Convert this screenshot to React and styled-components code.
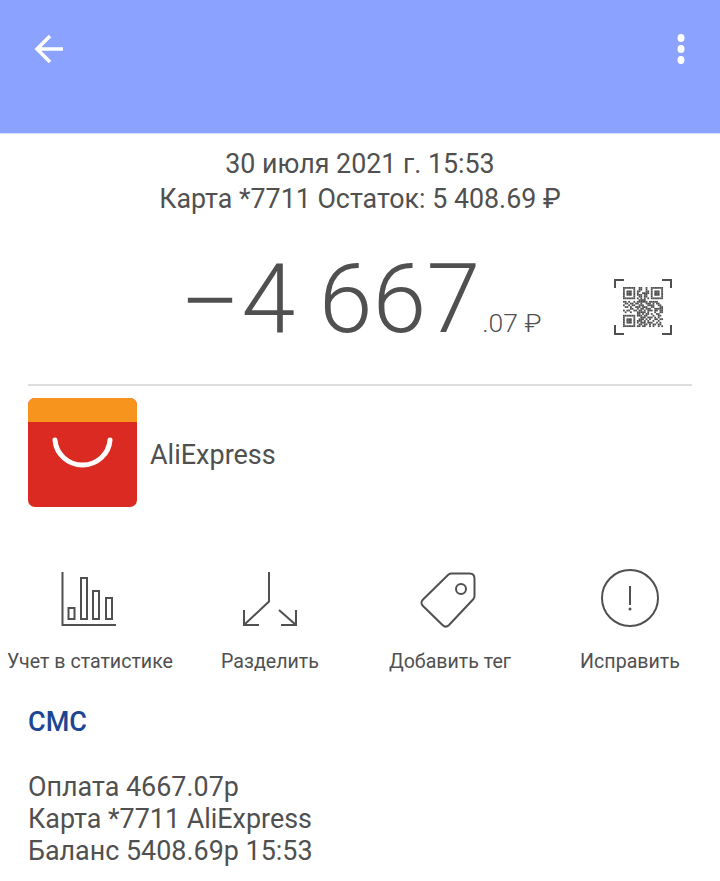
import React from 'react';
import styled, { createGlobalStyle } from 'styled-components';

const GlobalStyles = createGlobalStyle`
  html, body {
    margin: 0;
    padding: 0;
    background: #fff;
  }
  body {
    font-family: Roboto, "Liberation Sans", sans-serif;
    color: #505050;
  }
`;

const Page = styled.div`
  width: 720px;
  height: 881px;
  overflow: hidden;
  background: #fff;
`;

const TopBar = styled.header`
  height: 134px;
  background: #8ba3fe;
  border-bottom: 1px solid #d5deff;
  box-sizing: border-box;
  display: flex;
  justify-content: space-between;
  align-items: flex-start;
  padding: 33px 22px 0 33px;
`;

const Details = styled.section`
  padding-top: 13px;
  text-align: center;
  font-size: 26.8px;
  line-height: 35px;
`;

const DetailLine = styled.div`
  white-space: nowrap;
`;

const AmountRow = styled.div`
  height: 169px;
  margin: 0 28px;
  padding: 0 20px 0 151px;
  display: flex;
  align-items: flex-start;
  justify-content: space-between;
  border-bottom: 2px solid #dedede;
  box-sizing: border-box;
`;

const Amount = styled.div`
  display: flex;
  align-items: baseline;
  margin-top: 26px;
  font-weight: 300;
  font-size: 97px;
  line-height: 112px;
  white-space: nowrap;
`;

const Minus = styled.span`
  display: inline-block;
  margin-right: 7px;
  transform: translateY(3px) scaleX(1.12);
  transform-origin: left center;
`;

const Kopecks = styled.span`
  font-size: 26.5px;
  margin-left: 2px;
`;

const QrBox = styled.div`
  margin-top: 61px;
  width: 58px;
  height: 58px;
`;

const Merchant = styled.div`
  display: flex;
  align-items: center;
  gap: 13px;
  margin: 12px 28px 0;
  font-size: 27px;
`;

const MerchantName = styled.span`
  padding-top: 4px;
`;

const Actions = styled.nav`
  display: grid;
  grid-template-columns: repeat(4, 180px);
  margin-top: 64px;
`;

const Action = styled.div`
  display: flex;
  flex-direction: column;
  align-items: center;
  font-size: 19.6px;
  line-height: 24px;
  white-space: nowrap;
`;

const ActionIcon = styled.svg`
  display: block;
  width: 64px;
  height: 64px;
  margin-bottom: 15px;
  overflow: visible;
  fill: none;
  stroke: #505050;
  stroke-width: 2;
`;

const Sms = styled.section`
  margin: 32px 28px 0;
`;

const SmsTitle = styled.h2`
  margin: 0 0 33px;
  font-size: 27px;
  line-height: 32px;
  font-weight: 500;
  color: #1c4693;
`;

const SmsLine = styled.div`
  font-size: 26.9px;
  line-height: 32px;
  white-space: nowrap;
`;

const QR_ROWS = [
  '11111110011001001111111',
  '10000010011001001000001',
  '10111010110001101011101',
  '10111010100111101011101',
  '10111010111011001011101',
  '10000010011011001000001',
  '11111110101010101111111',
  '00000000011110000000000',
  '11010010111111011111000',
  '01101101101001110101100',
  '10010110011100111100110',
  '01101001110111001100011',
  '00001100101101110011111',
  '10110011011010111011011',
  '01001000111110100010011',
  '00000000110101101001100',
  '11111110111011000100110',
  '10000010001110111010100',
  '10111010011101010011011',
  '10111010111010100100100',
  '10111010101110111001010',
  '10000010011011010110110',
  '11111110110110010100101',
];

function QrIcon() {
  const cell = 40 / QR_ROWS.length;
  const cells = [];
  QR_ROWS.forEach((row, y) => {
    [...row].forEach((bit, x) => {
      if (bit === '1') {
        cells.push(<rect key={`${x}-${y}`} x={9 + x * cell} y={9 + y * cell} width={cell + 0.05} height={cell + 0.05} />);
      }
    });
  });
  return (
    <svg width="58" height="58" viewBox="0 0 58 58">
      <path
        d="M1 10V2h9M48 2h9v8M1 47v9h9M48 56h9v-9"
        fill="none"
        stroke="#505050"
        strokeWidth="2"
      />
      <g fill="#505050">{cells}</g>
    </svg>
  );
}

function AliLogo() {
  return (
    <svg width="109" height="109" viewBox="0 0 109 109" style={{ display: 'block' }}>
      <rect width="109" height="109" rx="7" fill="#da2a21" />
      <path d="M7 0h95a7 7 0 0 1 7 7v17H0V7a7 7 0 0 1 7-7z" fill="#f7941d" />
      <path
        d="M27 42c1 14 13 25 27.500 25S81 56 82 42"
        fill="none"
        stroke="#fff"
        strokeWidth="5"
        strokeLinecap="round"
      />
    </svg>
  );
}

function App() {
  return (
    <Page>
      <GlobalStyles />
      <TopBar>
        <svg width="34" height="34" viewBox="0 0 34 34" fill="none" stroke="#fff" strokeWidth="3.500">
          <path d="M4 16h26M17 3L4 16l13 13" />
        </svg>
        <svg width="34" height="34" viewBox="0 0 34 34" fill="#fff">
          <ellipse cx="17" cy="5" rx="3.500" ry="4" />
          <ellipse cx="17" cy="16" rx="3.500" ry="4" />
          <ellipse cx="17" cy="27" rx="3.500" ry="4" />
        </svg>
      </TopBar>

      <Details>
        <DetailLine>30 июля 2021 г. 15:53</DetailLine>
        <DetailLine>Карта *7711 Остаток: 5 408.69 ₽</DetailLine>
      </Details>

      <AmountRow>
        <Amount>
          <Minus>−</Minus>4 667<Kopecks>.07 ₽</Kopecks>
        </Amount>
        <QrBox>
          <QrIcon />
        </QrBox>
      </AmountRow>

      <Merchant>
        <AliLogo />
        <MerchantName>AliExpress</MerchantName>
      </Merchant>

      <Actions>
        <Action>
          <ActionIcon viewBox="0 0 64 64">
            <path d="M4.500 1v53H58" />
            <rect x="10.500" y="37" width="6" height="11" />
            <rect x="23" y="7" width="6" height="41" />
            <rect x="35" y="20" width="6" height="28" />
            <rect x="48" y="27" width="6" height="21" />
          </ActionIcon>
          Учет в статистике
        </Action>
        <Action>
          <ActionIcon viewBox="0 0 64 64">
            <path d="M31 1v29.500L6 54" />
            <path d="M6 39v15h15" />
            <path d="M41 39l17 15" />
            <path d="M58 39v15H43" />
          </ActionIcon>
          Разделить
        </Action>
        <Action>
          <ActionIcon viewBox="0 0 64 64">
            <path d="M33.500 2.500h18c3 0 5 2 5 5V25c0 1.500-.5 2.500-1.500 3.500L31 54c-2 2-4.500 2-6.500 0L5 35c-2-2-2-4.500 0-6.500L30.500 3.500c1-.7 2-1 3-1z" />
            <circle cx="43" cy="18" r="5" />
          </ActionIcon>
          Добавить тег
        </Action>
        <Action>
          <ActionIcon viewBox="0 0 64 64">
            <circle cx="32" cy="27" r="28" />
            <path d="M32 15v19" />
            <circle cx="32" cy="38" r="1.500" fill="#505050" stroke="none" />
          </ActionIcon>
          Исправить
        </Action>
      </Actions>

      <Sms>
        <SmsTitle>СМС</SmsTitle>
        <SmsLine>Оплата 4667.07р</SmsLine>
        <SmsLine>Карта *7711 AliExpress</SmsLine>
        <SmsLine>Баланс 5408.69р 15:53</SmsLine>
      </Sms>
    </Page>
  );
}

export default App;
